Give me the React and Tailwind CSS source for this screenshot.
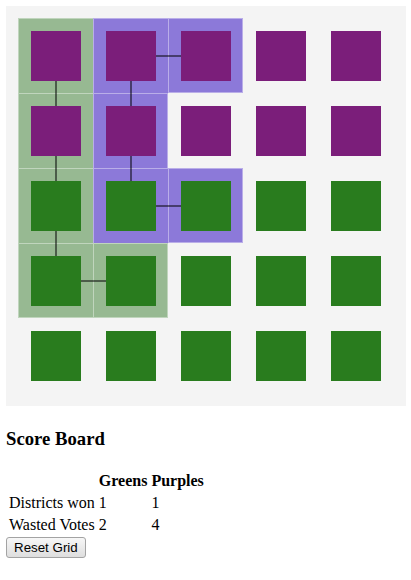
import React from "react";

// 5x5 voter grid: "p" purple, "g" green
const voters = [
  ["p", "p", "p", "p", "p"],
  ["p", "p", "p", "p", "p"],
  ["g", "g", "g", "g", "g"],
  ["g", "g", "g", "g", "g"],
  ["g", "g", "g", "g", "g"],
];

// district membership per cell: "G" greens, "P" purples, null none
const districts = [
  ["G", "P", "P", null, null],
  ["G", "P", null, null, null],
  ["G", "P", "P", null, null],
  ["G", "G", null, null, null],
  [null, null, null, null, null],
];

// connectors going right / down from a cell
const linksRight = new Set(["0-1", "2-1", "3-0"]);
const linksDown = new Set(["0-0", "1-0", "2-0", "0-1", "1-1"]);

const inDistrict = (r, c) =>
  r >= 0 && r < 5 && c >= 0 && c < 5 && districts[r][c] !== null;

const Cell = ({ r, c }) => {
  const d = districts[r][c];
  const key = `${r}-${c}`;
  const bg =
    d === "G" ? "bg-[#97b992]" : d === "P" ? "bg-[#8c79d9]" : "bg-transparent";
  const drawRight = d && !inDistrict(r, c + 1);
  const drawBottom = d && !inDistrict(r + 1, c);

  return (
    <div className={`relative w-[75px] h-[75px] pl-[13px] pt-[13px] ${bg}`}>
      {d && (
        <span
          className={`absolute inset-0 border-white/40 border-l border-t ${
            drawRight ? "border-r" : ""
          } ${drawBottom ? "border-b" : ""}`}
        />
      )}
      <div
        className={`relative w-[50px] h-[50px] ${
          voters[r][c] === "p" ? "bg-[#7b1e7a]" : "bg-[#297c1e]"
        }`}
      />
      {linksRight.has(key) && (
        <span className="absolute z-10 left-[63px] top-[37px] w-[25px] h-[2px] bg-black/50" />
      )}
      {linksDown.has(key) && (
        <span className="absolute z-10 left-[37px] top-[63px] w-[2px] h-[25px] bg-black/50" />
      )}
    </div>
  );
};

export default function App() {
  return (
    <div className="px-[6px] pt-[6px] bg-white text-black font-['Liberation_Serif',serif]">
      <div className="w-[400px] h-[400px] bg-[#f4f4f4] p-[12px]">
        <div className="grid grid-cols-[repeat(5,75px)]">
          {voters.map((row, r) =>
            row.map((_, c) => <Cell key={`${r}-${c}`} r={r} c={c} />)
          )}
        </div>
      </div>

      <h3 className="mt-[22px] mb-[19px] text-[18.72px] font-bold leading-[21.5px]">
        Score Board
      </h3>

      <table className="border-separate border-spacing-[2px] text-[16px] leading-[18px] -ml-0">
        <thead>
          <tr>
            <th className="p-[1px]"></th>
            <th className="p-[1px] font-bold text-center">Greens</th>
            <th className="p-[1px] font-bold text-center">Purples</th>
          </tr>
        </thead>
        <tbody>
          <tr>
            <td className="p-[1px]">Districts won</td>
            <td className="p-[1px]">1</td>
            <td className="p-[1px]">1</td>
          </tr>
          <tr>
            <td className="p-[1px]">Wasted Votes</td>
            <td className="p-[1px]">2</td>
            <td className="p-[1px]">4</td>
          </tr>
        </tbody>
      </table>

      <button className="block h-[21px] px-[7px] border border-[#a3a3a3] rounded-[3px] bg-gradient-to-b from-[#f7f7f7] to-[#dedede] text-[13.33px] leading-[15px] font-['Liberation_Sans',Arial,sans-serif] text-black">
        Reset Grid
      </button>
    </div>
  );
}
